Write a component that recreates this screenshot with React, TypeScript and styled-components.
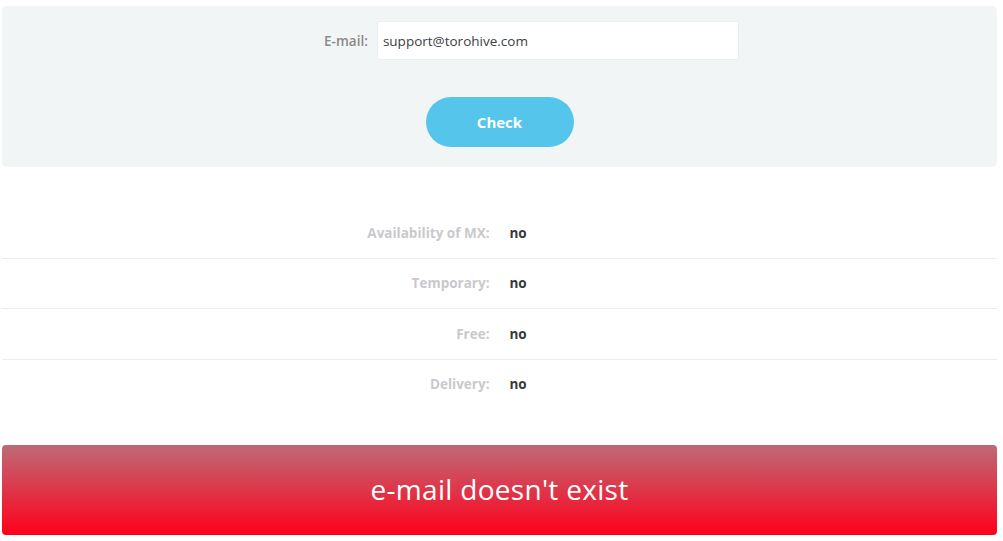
import React from "react";
import styled, { createGlobalStyle } from "styled-components";

const Global = createGlobalStyle`
  html, body { margin: 0; padding: 0; background: #fff; }
  body { font-family: "Open Sans", "DejaVu Sans", sans-serif; }
`;

const Page = styled.div`
  padding: 6px 6px 6px 2px;
`;

const Panel = styled.div`
  background: #f2f5f6;
  border-radius: 5px;
  padding: 15px 0 20px;
  display: flex;
  flex-direction: column;
  align-items: center;
  gap: 37px;
`;

const FormRow = styled.div`
  display: flex;
  align-items: center;
  gap: 9px;
  padding-left: 64px;
`;

const Label = styled.label`
  font-size: 13.5px;
  font-weight: 600;
  color: #8a8a8a;
`;

const Input = styled.input`
  box-sizing: border-box;
  width: 362px;
  height: 39px;
  border: 1px solid #ebeef0;
  border-radius: 2px;
  background: #fff;
  padding: 0 5px;
  font-family: "Open Sans", sans-serif;
  font-size: 13.5px;
  color: #3d3d45;
  outline: none;
`;

const Button = styled.button`
  width: 148px;
  height: 50px;
  border: none;
  border-radius: 25px;
  background: #56c5ec;
  color: #fff;
  font-family: "Open Sans", sans-serif;
  font-weight: 700;
  font-size: 15px;
  cursor: pointer;
`;

const Results = styled.div`
  margin-top: 41px;
`;

const Row = styled.div<{ $last?: boolean }>`
  display: grid;
  grid-template-columns: 1fr 1fr;
  align-items: center;
  height: 49.5px;
  border-bottom: ${(p) => (p.$last ? "none" : "1px solid #ececec")};
`;

const Key = styled.div`
  text-align: right;
  padding-right: 10px;
  font-size: 13.5px;
  font-weight: 700;
  color: #c9c9cc;
`;

const Value = styled.div`
  padding-left: 10px;
  font-size: 13.5px;
  font-weight: 700;
  color: #383838;
`;

const Banner = styled.div`
  margin-top: 36px;
  height: 90px;
  border-radius: 4px;
  background: linear-gradient(to bottom, #bd6b77 0%, #ff001b 100%);
  display: flex;
  align-items: center;
  justify-content: center;
  color: #fff;
  font-family: "Open Sans", sans-serif;
  font-weight: 500;
  font-size: 28px;
  letter-spacing: 0.3px;
  padding-bottom: 2px;
  box-sizing: border-box;
`;

const rows = [
  ["Availability of MX:", "no"],
  ["Temporary:", "no"],
  ["Free:", "no"],
  ["Delivery:", "no"],
];

export default function App() {
  return (
    <Page>
      <Global />
      <Panel>
        <FormRow>
          <Label>E-mail:</Label>
          <Input defaultValue="support@torohive.com" />
        </FormRow>
        <Button>Check</Button>
      </Panel>
      <Results>
        {rows.map(([k, v], i) => (
          <Row key={k} $last={i === rows.length - 1}>
            <Key>{k}</Key>
            <Value>{v}</Value>
          </Row>
        ))}
      </Results>
      <Banner>e-mail doesn't exist</Banner>
    </Page>
  );
}
